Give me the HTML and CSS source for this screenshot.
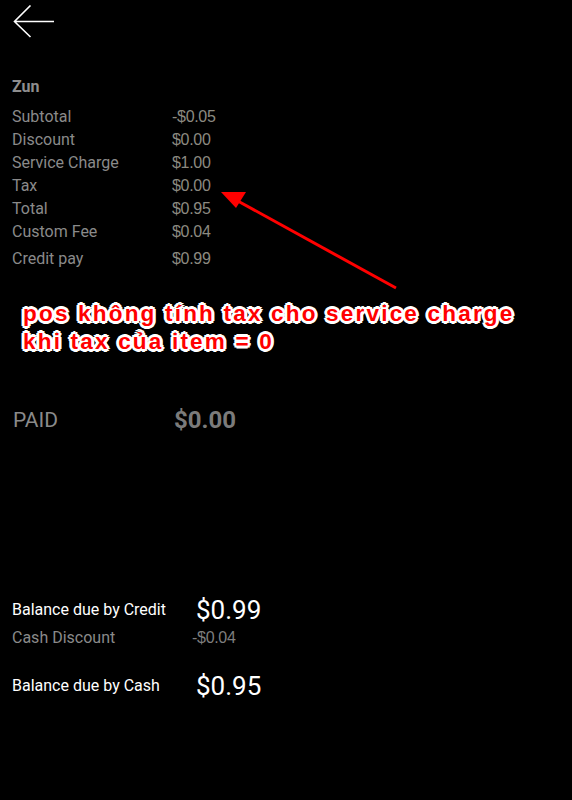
FILE: index.html
```html
<!DOCTYPE html>
<html lang="vi">
<head>
    <meta charset="UTF-8">
    <meta name="viewport" content="width=device-width, initial-scale=1.0">
    <title>Payment</title>
    <link rel="stylesheet" href="styles.css">
</head>
<body>
    <div class="page">
        <!-- back button -->
        <div class="topbar">
            <svg class="back" width="44" height="40" viewBox="0 0 44 40">
                <path d="M41 16.5 H1.5 M17.5 0.5 L1.5 16.5 L17.5 32" fill="none" stroke="#fff" stroke-width="1.6"/>
            </svg>
        </div>

        <!-- order summary -->
        <div class="summary">
            <div class="name">Zun</div>
            <div class="row"><span class="label">Subtotal</span><span class="value">-$0.05</span></div>
            <div class="row"><span class="label">Discount</span><span class="value">$0.00</span></div>
            <div class="row"><span class="label">Service Charge</span><span class="value">$1.00</span></div>
            <div class="row"><span class="label">Tax</span><span class="value">$0.00</span></div>
            <div class="row"><span class="label">Total</span><span class="value">$0.95</span></div>
            <div class="row"><span class="label">Custom Fee</span><span class="value">$0.04</span></div>
            <div class="row credit"><span class="label">Credit pay</span><span class="value">$0.99</span></div>
        </div>

        <div class="paid">
            <span class="paid-label">PAID</span>
            <span class="paid-value">$0.00</span>
        </div>

        <!-- balance -->
        <div class="balance">
            <div class="due"><span class="due-label">Balance due by Credit</span><span class="due-value">$0.99</span></div>
            <div class="disc"><span class="label">Cash Discount</span><span class="disc-value">-$0.04</span></div>
            <div class="due cash"><span class="due-label">Balance due by Cash</span><span class="due-value">$0.95</span></div>
        </div>

        <!-- annotation -->
        <svg class="arrow" width="572" height="800" viewBox="0 0 572 800">
            <line x1="396" y1="288" x2="236" y2="200" stroke="#ff0000" stroke-width="3"/>
            <polygon points="221,192 246,192 236,208" fill="#ff0000"/>
        </svg>
        <div class="note">pos không tính tax cho service charge<br>khi tax của item = 0</div>
    </div>
</body>
</html>
```

FILE: styles.css
```css
body {
    margin: 0;
    background: #000;
    font-family: Roboto, "Liberation Sans", sans-serif;
    overflow: hidden;
}
.page {
    position: relative;
    width: 572px;
    height: 800px;
}
.topbar {
    height: 75px;
    padding: 5px 0 0 13px;
    box-sizing: border-box;
}
.back {
    display: block;
}
.summary {
    padding-left: 12px;
    font-size: 16px;
}
.name {
    line-height: 23px;
    font-weight: bold;
    color: #8e8e8e;
    margin-bottom: 7px;
}
.row {
    display: flex;
    line-height: 23px;
}
.row.credit {
    margin-top: 4px;
}
.label {
    width: 160px;
    color: #8a8a8a;
}
.value {
    font-family: "Liberation Sans", Arial, sans-serif;
    color: #8c8a80;
    letter-spacing: -0.3px;
}
.paid {
    display: flex;
    padding-left: 13px;
    margin-top: 135px;
    line-height: 30px;
    color: #8a8a8a;
}
.paid-label {
    width: 161px;
    font-size: 21px;
}
.paid-value {
    font-size: 24px;
    font-weight: bold;
    color: #7b7b7b;
}
.balance {
    padding-left: 12px;
    margin-top: 160px;
}
.due {
    display: flex;
    align-items: center;
    line-height: 30px;
    color: #fff;
}
.due-label {
    width: 184px;
    font-size: 16px;
}
.due-value {
    font-size: 26px;
}
.due.cash {
    margin-top: 22px;
}
.disc {
    display: flex;
    line-height: 23px;
    font-size: 16px;
    margin-top: 1px;
}
.disc .label {
    width: 180px;
}
.disc-value {
    font-family: "Liberation Sans", Arial, sans-serif;
    font-size: 16px;
    color: #7e7e7e;
    letter-spacing: -0.3px;
}
.arrow {
    position: absolute;
    left: 0;
    top: 0;
}
.note {
    position: absolute;
    left: 23px;
    top: 300px;
    font-family: "Liberation Sans", Arial, sans-serif;
    font-weight: bold;
    font-size: 22.5px;
    line-height: 28px;
    letter-spacing: 2.2px;
    color: #ff0000;
    white-space: nowrap;
    text-shadow: 3px 0 #fff, -3px 0 #fff, 0 3px #fff, 0 -3px #fff,
        2px 2px #fff, -2px 2px #fff, 2px -2px #fff, -2px -2px #fff;
}
```
